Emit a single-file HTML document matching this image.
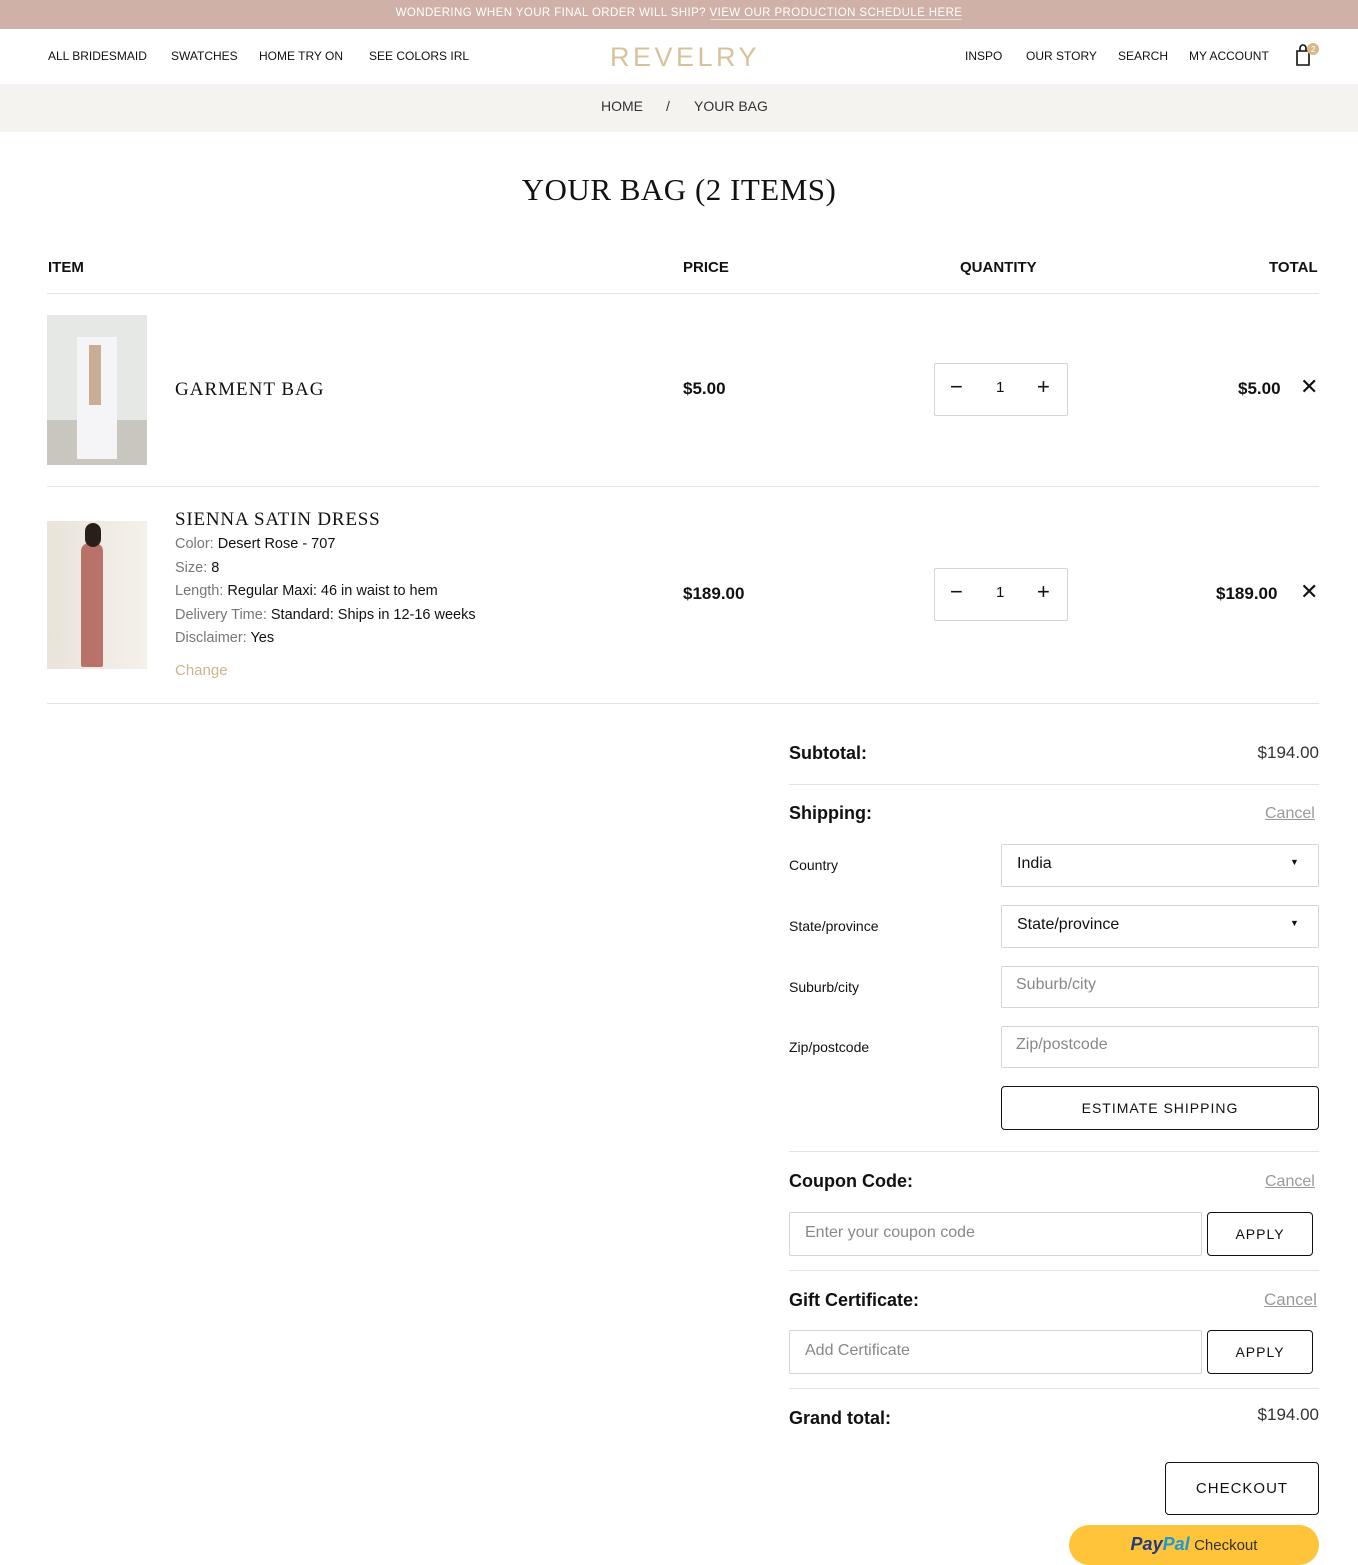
<!DOCTYPE html>
<html><head><meta charset="utf-8"><style>
*{box-sizing:border-box;margin:0;padding:0}
body{width:1358px;height:1553px;overflow:hidden;position:relative;font-family:"Liberation Sans",sans-serif;color:#111;background:#fff}
.a{position:absolute;white-space:nowrap}
.nav{font-size:12px;top:49px;letter-spacing:0}
.serif{font-family:"Liberation Serif",serif}
.line{position:absolute;height:1px;background:#e3e3e3}
.box{position:absolute;border:1px solid #d4d4d4;border-radius:2px}
.btn{position:absolute;border:1px solid #111;border-radius:4px;display:flex;align-items:center;justify-content:center;font-size:14px;letter-spacing:1px}
.ph{color:#888;font-size:16px}
.gr{color:#777}
.cancel{color:#999;text-decoration:underline;font-size:16px}
.lbl{font-size:18px;font-weight:bold}
.sm{font-size:14px}
</style></head><body>
<div class="a" style="left:0;top:0;width:1358px;height:29px;background:#d0b1a7;color:#fff;font-size:11.5px;text-align:center;line-height:27px;letter-spacing:.4px">WONDERING WHEN YOUR FINAL ORDER WILL SHIP? <span style="border-bottom:1px solid #ddd">VIEW OUR PRODUCTION SCHEDULE HERE</span></div>
<div class="a nav" style="left:48px">ALL BRIDESMAID</div>
<div class="a nav" style="left:171px">SWATCHES</div>
<div class="a nav" style="left:259px">HOME TRY ON</div>
<div class="a nav" style="left:369px">SEE COLORS IRL</div>
<div class="a" style="left:610px;top:42px;font-size:27px;letter-spacing:3.5px;color:#d8c29c">REVELRY</div>
<div class="a nav" style="left:965px">INSPO</div>
<div class="a nav" style="left:1026px">OUR STORY</div>
<div class="a nav" style="left:1118px">SEARCH</div>
<div class="a nav" style="left:1189px">MY ACCOUNT</div>
<svg class="a" style="left:1294px;top:42px" width="30" height="26"><path d="M3 9h12v14H3z M6 9V6a3 3 0 0 1 6 0v3" fill="none" stroke="#111" stroke-width="1.6"/><circle cx="19" cy="7" r="6" fill="#d8b98a"/><text x="17" y="10" font-size="8" fill="#fff" font-family="Liberation Sans">2</text></svg>
<div class="a" style="left:0;top:84px;width:1358px;height:48px;background:#f5f3f0"></div>
<div class="a" style="left:601px;top:98px;font-size:14px;color:#333">HOME</div>
<div class="a" style="left:666px;top:98px;font-size:14px;color:#333">/</div>
<div class="a" style="left:694px;top:98px;font-size:14px;color:#333">YOUR BAG</div>
<div class="a serif" style="left:0;width:1358px;text-align:center;top:172px;font-size:31px;letter-spacing:.5px">YOUR BAG (2 ITEMS)</div>
<div class="a" style="left:48px;top:259px;font-size:15px;font-weight:bold">ITEM</div>
<div class="a" style="left:683px;top:259px;font-size:15px;font-weight:bold">PRICE</div>
<div class="a" style="left:960px;top:259px;font-size:15px;font-weight:bold">QUANTITY</div>
<div class="a" style="left:1269px;top:259px;font-size:15px;font-weight:bold">TOTAL</div>
<div class="line" style="left:47px;top:293px;width:1272px"></div>
<div class="a" style="left:47px;top:315px;width:100px;height:150px;background:linear-gradient(#e6e8e6 0 70%,#c9c5bf 70%)"><div style="position:absolute;left:30px;top:22px;width:40px;height:122px;background:#f5f5f7"></div><div style="position:absolute;left:42px;top:30px;width:12px;height:60px;background:#c9ad95"></div></div>
<div class="a serif" style="left:175px;top:379px;font-size:19px;letter-spacing:1px">GARMENT BAG</div>
<div class="a" style="left:683px;top:379px;font-size:17px;font-weight:bold">$5.00</div>
<div class="box" style="left:934px;top:363px;width:134px;height:53px"></div>
<div class="a" style="left:950px;top:374px;font-size:22px">−</div><div class="a" style="left:996px;top:379px;font-size:15px">1</div><div class="a" style="left:1037px;top:374px;font-size:22px">+</div>
<div class="a" style="left:1238px;top:379px;font-size:17px;font-weight:bold">$5.00</div>
<div class="a" style="left:1300px;top:374px;font-size:22px">✕</div>
<div class="line" style="left:47px;top:486px;width:1272px"></div>
<div class="a" style="left:47px;top:521px;width:100px;height:148px;background:linear-gradient(90deg,#e9e3da,#f4f0ea)"><div style="position:absolute;left:34px;top:22px;width:22px;height:124px;background:#b9726a;border-radius:8px 8px 2px 2px"></div><div style="position:absolute;left:38px;top:2px;width:16px;height:24px;background:#2a1e18;border-radius:8px"></div></div>
<div class="a serif" style="left:175px;top:509px;font-size:19px;letter-spacing:.8px">SIENNA SATIN DRESS</div>
<div class="a" style="left:175px;top:533px;line-height:23.5px;font-size:14.5px"><span class="gr">Color:</span> Desert Rose - 707<br><span class="gr">Size:</span> 8<br><span class="gr">Length:</span> Regular Maxi: 46 in waist to hem<br><span class="gr">Delivery Time:</span> Standard: Ships in 12-16 weeks<br><span class="gr">Disclaimer:</span> Yes</div>
<div class="a" style="left:175px;top:662px;font-size:15px;color:#d0b48c">Change</div>
<div class="a" style="left:683px;top:584px;font-size:17px;font-weight:bold">$189.00</div>
<div class="box" style="left:934px;top:568px;width:134px;height:53px"></div>
<div class="a" style="left:950px;top:579px;font-size:22px">−</div><div class="a" style="left:996px;top:584px;font-size:15px">1</div><div class="a" style="left:1037px;top:579px;font-size:22px">+</div>
<div class="a" style="left:1216px;top:584px;font-size:17px;font-weight:bold">$189.00</div>
<div class="a" style="left:1300px;top:579px;font-size:22px">✕</div>
<div class="line" style="left:47px;top:703px;width:1272px"></div>

<div class="a lbl" style="left:789px;top:743px">Subtotal:</div>
<div class="a" style="right:39px;top:743px;font-size:17px;color:#333">$194.00</div>
<div class="line" style="left:789px;top:784px;width:530px"></div>
<div class="a lbl" style="left:789px;top:803px">Shipping:</div>
<div class="a cancel" style="left:1265px;top:805px">Cancel</div>
<div class="a sm" style="left:789px;top:857px">Country</div>
<div class="box" style="left:1001px;top:844px;width:318px;height:43px"></div><div class="a" style="left:1017px;top:855px;font-size:16px">India</div><div class="a" style="left:1290px;top:857px;font-size:9px">▼</div>
<div class="a sm" style="left:789px;top:918px">State/province</div>
<div class="box" style="left:1001px;top:905px;width:318px;height:43px"></div><div class="a" style="left:1017px;top:916px;font-size:16px">State/province</div><div class="a" style="left:1290px;top:918px;font-size:9px">▼</div>
<div class="a sm" style="left:789px;top:979px">Suburb/city</div>
<div class="box" style="left:1001px;top:966px;width:318px;height:42px"></div><div class="a ph" style="left:1016px;top:976px">Suburb/city</div>
<div class="a sm" style="left:789px;top:1039px">Zip/postcode</div>
<div class="box" style="left:1001px;top:1026px;width:318px;height:42px"></div><div class="a ph" style="left:1016px;top:1036px">Zip/postcode</div>
<div class="btn" style="left:1001px;top:1086px;width:318px;height:44px">ESTIMATE SHIPPING</div>
<div class="line" style="left:789px;top:1151px;width:530px"></div>
<div class="a lbl" style="left:789px;top:1171px">Coupon Code:</div>
<div class="a cancel" style="left:1265px;top:1173px">Cancel</div>
<div class="box" style="left:789px;top:1212px;width:413px;height:44px"></div><div class="a ph" style="left:805px;top:1224px">Enter your coupon code</div>
<div class="btn" style="left:1207px;top:1212px;width:106px;height:44px">APPLY</div>
<div class="line" style="left:789px;top:1270px;width:530px"></div>
<div class="a lbl" style="left:789px;top:1290px">Gift Certificate:</div>
<div class="a cancel" style="left:1264px;top:1290px;font-size:17px">Cancel</div>
<div class="box" style="left:789px;top:1330px;width:413px;height:44px"></div><div class="a ph" style="left:805px;top:1342px">Add Certificate</div>
<div class="btn" style="left:1207px;top:1330px;width:106px;height:44px">APPLY</div>
<div class="line" style="left:789px;top:1388px;width:530px"></div>
<div class="a lbl" style="left:789px;top:1408px">Grand total:</div>
<div class="a" style="right:39px;top:1405px;font-size:17px;color:#333">$194.00</div>
<div class="btn" style="left:1165px;top:1462px;width:154px;height:53px;font-size:15px">CHECKOUT</div>
<div class="a" style="left:1069px;top:1525px;width:250px;height:40px;background:#ffc439;border-radius:20px;text-align:center;padding-top:9px"><span style="font-weight:bold;font-style:italic;font-size:18px;color:#253b80">Pay<span style="color:#179bd7">Pal</span></span> <span style="font-size:15px;color:#333">Checkout</span></div>
</body></html>
